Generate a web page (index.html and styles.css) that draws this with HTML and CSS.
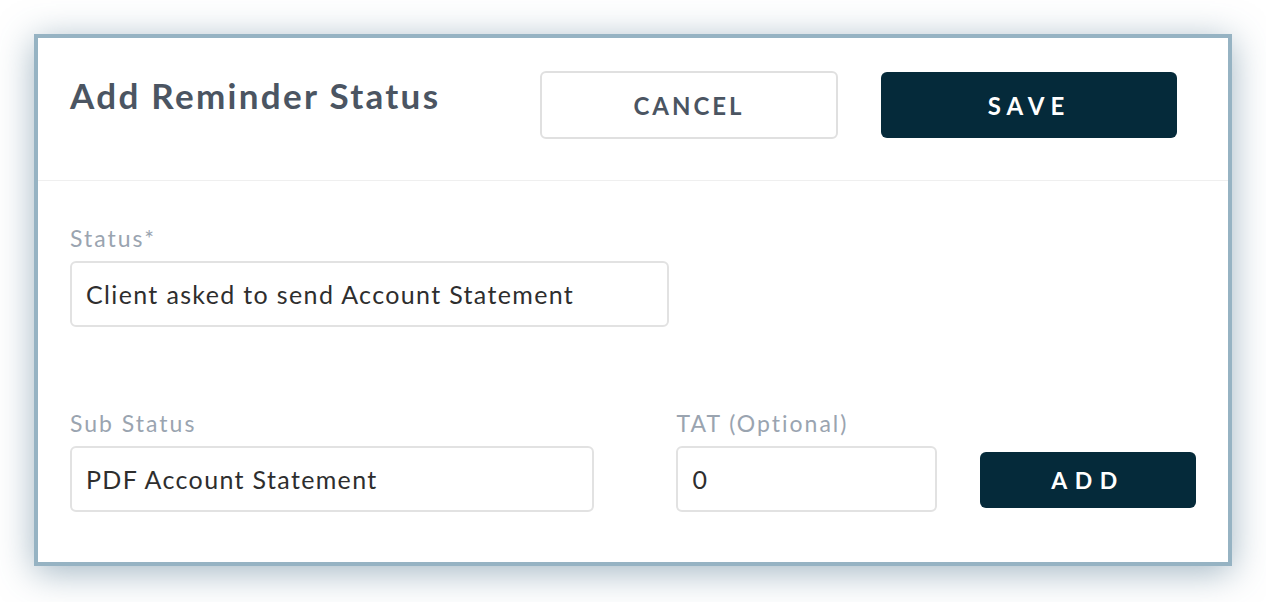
FILE: index.html
```html
<!DOCTYPE html>
<html>
<head>
    <title>Add Reminder Status</title>
    <link rel="stylesheet" href="styles.css">
</head>
<body>
    <div class="modal">
        <div class="modal-header">
            <h1 class="modal-title">Add Reminder Status</h1>
            <button class="btn btn-cancel">CANCEL</button>
            <button class="btn btn-save">SAVE</button>
        </div>
        <div class="modal-body">
            <div class="field field-status">
                <label>Status*</label>
                <input type="text" value="Client asked to send Account Statement">
            </div>
            <div class="sub-row">
                <div class="field field-sub">
                    <label>Sub Status</label>
                    <input type="text" value="PDF Account Statement">
                </div>
                <div class="field field-tat">
                    <label>TAT (Optional)</label>
                    <input type="text" value="0">
                </div>
                <button class="btn btn-add">ADD</button>
            </div>
        </div>
    </div>
</body>
</html>
```

FILE: styles.css
```css
body {
    margin: 0;
    min-height: 602px;
    background-color: #fff;
    font-family: Lato, "Open Sans", sans-serif;
}

.modal {
    box-sizing: border-box;
    width: 1198px;
    margin: 34px 0 0 34px;
    background-color: #fff;
    border: 4px solid #96b3c3;
    box-shadow: 0 6px 34px rgba(70, 110, 135, 0.5);
}

.modal-header {
    display: flex;
    align-items: center;
    padding: 33px 32px 41px 32px;
    border-bottom: 1px solid #efefef;
}

.modal-title {
    align-self: flex-start;
    width: 470px;
    margin: 3px 0 0 0;
    font-size: 35px;
    font-weight: 700;
    letter-spacing: 2.3px;
    color: #4b5562;
}

.btn {
    box-sizing: border-box;
    font-family: Lato, "Open Sans", sans-serif;
    font-weight: 700;
    border-radius: 6px;
    cursor: pointer;
}

.btn-cancel {
    width: 298px;
    height: 68px;
    background-color: #fff;
    border: 2px solid #e0e0e0;
    color: #4b5562;
    font-size: 24px;
    letter-spacing: 3px;
}

.btn-save {
    width: 296px;
    height: 66px;
    margin-left: 43px;
    background-color: #052a3a;
    border: none;
    color: #fff;
    font-size: 24px;
    letter-spacing: 6px;
}

.modal-body {
    padding: 43px 32px 50px 32px;
}

.field label {
    display: block;
    margin-bottom: 9px;
    font-size: 23px;
    letter-spacing: 2px;
    color: #9aa4b0;
}

.field input {
    box-sizing: border-box;
    width: 100%;
    height: 66px;
    padding: 0 14px;
    border: 2px solid #e2e2e2;
    border-radius: 6px;
    font-family: Lato, "Open Sans", sans-serif;
    font-size: 25px;
    letter-spacing: 1.35px;
    color: #2e2e2e;
    outline: none;
}

.field-status {
    width: 599px;
}

.sub-row {
    display: flex;
    align-items: flex-end;
    margin-top: 82px;
}

.field-sub {
    width: 525px;
}

.field-tat {
    width: 261px;
    margin-left: 82px;
}

.btn-add {
    width: 216px;
    height: 56px;
    margin: 0 0 4px 43px;
    background-color: #052a3a;
    border: none;
    color: #fff;
    font-size: 23px;
    letter-spacing: 7.5px;
}
```
